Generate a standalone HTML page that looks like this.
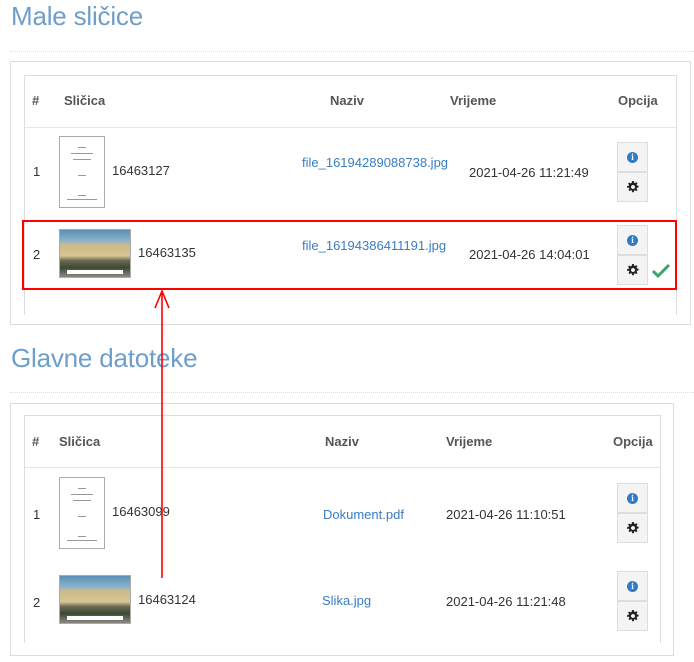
<!DOCTYPE html>
<html><head><meta charset="utf-8"><style>
*{margin:0;padding:0;box-sizing:border-box}
body{width:694px;height:662px;background:#fff;position:relative;overflow:hidden;font-family:"Liberation Sans","DejaVu Sans",sans-serif;font-size:13px;color:#333}
.a{position:absolute;white-space:nowrap}
h1{position:absolute;font-weight:normal;font-size:26px;color:#6e9fcb;left:11px;letter-spacing:-0.2px}
.hr{position:absolute;left:10px;width:684px;border-top:1px dotted #ddd;height:0}
.box{position:absolute;border:1px solid #ddd}
.line{position:absolute;height:1px;background:#e8e8e8}
.th{font-weight:bold;color:#555}
.lnk{color:#3a7cc3}
.btn{position:absolute;width:31px;height:30px;background:#f4f4f4;border:1px solid #ddd;display:flex;align-items:center;justify-content:center}
.ic{width:11px;height:11px;border-radius:50%;background:#2f7bc4;color:#fff;font:bold 9px/11px "Liberation Serif",serif;text-align:center}
.doc{position:absolute;border:1px solid #aaa;background:#fff}
.doc i{position:absolute;left:25%;width:50%;height:1px;background:#999}
.img{position:absolute;border:1px solid #aaa;background:linear-gradient(#5a8fb5 0,#8fb6cf 25%,#c9b98a 30%,#d8c591 55%,#6a6a55 65%,#3b4a32 80%,#8a8a80 100%)}
.img b{position:absolute;left:10%;right:10%;bottom:3px;height:4px;background:#fff}
</style></head><body>
<svg width="0" height="0" style="position:absolute"><defs><g id="g"><path d="M5.2 0h1.6l.3 1.6 1 .4 1.3-.9 1.1 1.1-.9 1.3.4 1 1.6.3v1.6l-1.6.3-.4 1 .9 1.3-1.1 1.1-1.3-.9-1 .4-.3 1.6H5.2l-.3-1.6-1-.4-1.3.9-1.1-1.1.9-1.3-.4-1L0 6.8V5.2l1.6-.3.4-1-.9-1.3 1.1-1.1 1.3.9 1-.4z M6 4a2 2 0 1 0 .01 0z" fill="#222" fill-rule="evenodd"/></g></defs></svg>

<h1 style="top:1px">Male sličice</h1>
<div class="hr" style="top:51px"></div>
<div class="box" style="left:10px;top:61px;width:681px;height:264px"></div>
<div class="box" style="left:24px;top:75px;width:653px;height:240px;border-bottom:none"></div>
<div class="line" style="left:25px;top:127px;width:651px"></div>

<div class="a th" style="left:32px;top:93px">#</div>
<div class="a th" style="left:64px;top:93px">Sličica</div>
<div class="a th" style="left:330px;top:93px">Naziv</div>
<div class="a th" style="left:450px;top:93px">Vrijeme</div>
<div class="a th" style="left:618px;top:93px">Opcija</div>

<div class="a" style="left:33px;top:164px">1</div>
<div class="doc" style="left:59px;top:136px;width:46px;height:72px"><i style="top:10px;left:40%;width:20%"></i><i style="top:16px"></i><i style="top:22px;left:30%;width:40%"></i><i style="top:38px;left:40%;width:20%"></i><i style="top:58px;left:40%;width:20%"></i><i style="top:62px;left:15%;width:70%"></i></div>
<div class="a" style="left:112px;top:163px">16463127</div>
<div class="a lnk" style="left:302px;top:155px">file_16194289088738.jpg</div>
<div class="a" style="left:469px;top:165px">2021-04-26 11:21:49</div>
<div class="btn" style="left:617px;top:142px"><div class="ic">i</div></div>
<div class="btn" style="left:617px;top:172px"><svg width="12" height="12"><use href="#g"/></svg></div>

<div class="a" style="left:33px;top:247px">2</div>
<div class="img" style="left:59px;top:229px;width:72px;height:49px"><b></b></div>
<div class="a" style="left:138px;top:245px">16463135</div>
<div class="a lnk" style="left:302px;top:238px">file_16194386411191.jpg</div>
<div class="a" style="left:469px;top:247px">2021-04-26 14:04:01</div>
<div class="btn" style="left:617px;top:225px"><div class="ic">i</div></div>
<div class="btn" style="left:617px;top:255px"><svg width="12" height="12"><use href="#g"/></svg></div>
<svg class="a" style="left:651px;top:263px" width="20" height="16" viewBox="0 0 20 16"><path d="M2 8 L7 13 L18 2" fill="none" stroke="#3aa66a" stroke-width="3"/></svg>

<div class="a" style="left:22px;top:220px;width:655px;height:70px;border:2px solid #f00"></div>

<h1 style="top:343px">Glavne datoteke</h1>
<div class="hr" style="top:392px"></div>
<div class="box" style="left:10px;top:403px;width:664px;height:253px"></div>
<div class="box" style="left:24px;top:415px;width:637px;height:228px;border-bottom:none"></div>
<div class="line" style="left:25px;top:467px;width:635px"></div>

<div class="a th" style="left:32px;top:434px">#</div>
<div class="a th" style="left:59px;top:434px">Sličica</div>
<div class="a th" style="left:325px;top:434px">Naziv</div>
<div class="a th" style="left:446px;top:434px">Vrijeme</div>
<div class="a th" style="left:613px;top:434px">Opcija</div>

<div class="a" style="left:33px;top:507px">1</div>
<div class="doc" style="left:59px;top:477px;width:46px;height:72px"><i style="top:10px;left:40%;width:20%"></i><i style="top:16px"></i><i style="top:22px;left:30%;width:40%"></i><i style="top:38px;left:40%;width:20%"></i><i style="top:58px;left:40%;width:20%"></i><i style="top:62px;left:15%;width:70%"></i></div>
<div class="a" style="left:112px;top:504px">16463099</div>
<div class="a lnk" style="left:323px;top:507px">Dokument.pdf</div>
<div class="a" style="left:446px;top:507px">2021-04-26 11:10:51</div>
<div class="btn" style="left:617px;top:483px"><div class="ic">i</div></div>
<div class="btn" style="left:617px;top:513px"><svg width="12" height="12"><use href="#g"/></svg></div>

<div class="a" style="left:33px;top:595px">2</div>
<div class="img" style="left:59px;top:575px;width:72px;height:49px"><b></b></div>
<div class="a" style="left:138px;top:592px">16463124</div>
<div class="a lnk" style="left:322px;top:593px">Slika.jpg</div>
<div class="a" style="left:446px;top:594px">2021-04-26 11:21:48</div>
<div class="btn" style="left:617px;top:571px"><div class="ic">i</div></div>
<div class="btn" style="left:617px;top:601px"><svg width="12" height="12"><use href="#g"/></svg></div>

<svg class="a" style="left:150px;top:288px" width="24" height="292" viewBox="0 0 24 292"><path d="M12 3 L12 290 M5 20 L12 3 L19 20" fill="none" stroke="#f00" stroke-width="1.6"/></svg>
</body></html>
